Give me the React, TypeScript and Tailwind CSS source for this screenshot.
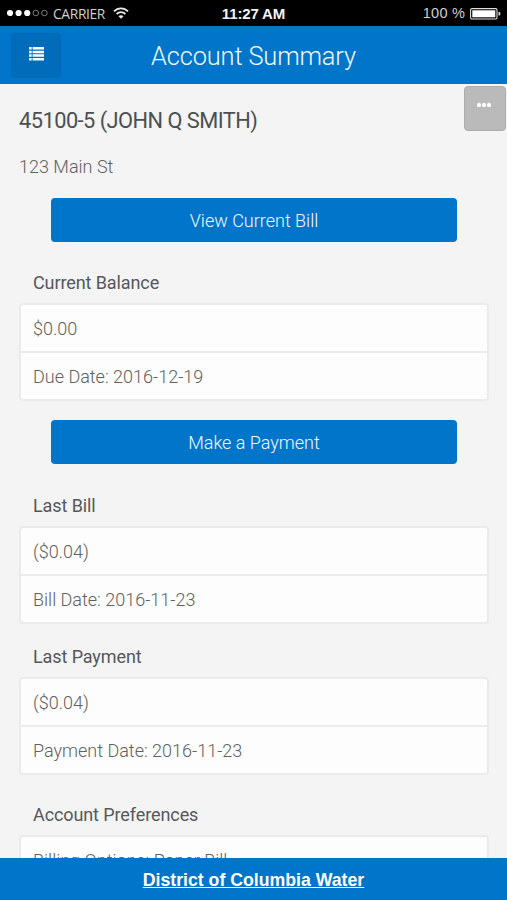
import React from "react";

type TextProps = { children: React.ReactNode };

function StatusBar() {
  return (
    <div className="grid h-[26px] shrink-0 grid-cols-3 items-center bg-black px-[7px] font-['Liberation_Sans',sans-serif] text-[#d0d0d0]">
      <div className="flex items-center">
        <svg width="42" height="8" viewBox="0 0 42 8" className="shrink-0">
          <circle cx="3" cy="4" r="3.1" fill="#fff" />
          <circle cx="11.6" cy="4" r="3.1" fill="#fff" />
          <circle cx="20.2" cy="4" r="3.1" fill="#fff" />
          <circle cx="28.8" cy="4" r="2.8" fill="none" stroke="#999" strokeWidth="0.8" />
          <circle cx="37.4" cy="4" r="2.8" fill="none" stroke="#999" strokeWidth="0.8" />
        </svg>
        <span className="ml-[4px] mt-px font-['Open_Sans',sans-serif] text-[13.8px] leading-none tracking-[-0.35px]">CARRIER</span>
        <svg width="16" height="12" viewBox="0 0 16 12" className="ml-[8px] shrink-0" fill="none" stroke="#e8e8e8" strokeWidth="1.8">
          <path d="M1 4.4C4.9 0.3 11.1 0.3 15 4.4" />
          <path d="M3.6 7C6.1 4.5 9.9 4.5 12.4 7" />
          <path d="M8 11.8L5.5 9.2C6.9 7.8 9.1 7.8 10.5 9.2Z" fill="#e8e8e8" stroke="none" />
        </svg>
      </div>
      <span className="whitespace-nowrap text-center text-[15px] font-bold leading-none tracking-[-0.15px] text-[#f4f4f4]">11:27 AM</span>
      <div className="flex items-center justify-end">
        <span className="mt-px whitespace-nowrap text-[14.5px] leading-none tracking-[0.2px]">100 %</span>
        <svg width="31" height="12" viewBox="0 0 31 12" className="-mr-[1px] ml-[5px] mt-px shrink-0">
          <rect x="0.6" y="0.6" width="26.4" height="10.4" rx="1.4" fill="none" stroke="#ddd" strokeWidth="1.1" />
          <rect x="2.3" y="2.3" width="23" height="7" fill="#fff" />
          <path d="M28.5 4h.8q1 0 1 1v1.6q0 1-1 1h-.8z" fill="#ddd" />
        </svg>
      </div>
    </div>
  );
}

function Header() {
  return (
    <header className="grid h-[58px] shrink-0 grid-cols-[1fr_auto_1fr] items-center bg-[#0175c9] px-[11px]">
      <button aria-label="Menu" className="flex h-[45px] w-[50px] items-center justify-center rounded-[4px] border border-[#0069b5] bg-[#016cb9]">
        <svg width="15" height="14" viewBox="0 0 15 13" preserveAspectRatio="none" fill="#fff" className="-mt-[2px]">
          <path d="M0 0h2.7v2.3H0zM3.6 0H15v2.3H3.6zM0 3.4h2.7v2.3H0zM3.6 3.4H15v2.3H3.6zM0 6.8h2.7v2.3H0zM3.6 6.8H15v2.3H3.6zM0 10.2h2.7v2.3H0zM3.6 10.2H15v2.3H3.6z" />
        </svg>
      </button>
      <h1 className="whitespace-nowrap pt-px text-[25.4px] font-light leading-[30px] tracking-[-0.15px] text-[#f2f9ff]">Account Summary</h1>
    </header>
  );
}

function BlueButton({ children }: TextProps) {
  return (
    <button className="mx-[32px] flex h-[44px] items-center justify-center rounded-[4px] bg-[#0175c9] text-[18px] font-light text-[#f2f9ff]">
      {children}
    </button>
  );
}

function SectionTitle({ children }: TextProps) {
  return <h3 className="px-[14px] text-[18px] font-normal leading-[22px] tracking-[-0.1px] text-[#55585a]">{children}</h3>;
}

function Card({ rows }: { rows: string[] }) {
  return (
    <ul className="divide-y-2 divide-[#ebebeb] rounded-[4px] border-2 border-[#ebebeb] bg-[#fdfdfd] text-[18px] font-light text-[#606060]">
      {rows.map((row) => (
        <li key={row} className="flex h-[48px] items-center px-[12px] last:h-[46px]">
          {row}
        </li>
      ))}
    </ul>
  );
}

export default function App() {
  return (
    <div className="relative flex h-[900px] w-full flex-col overflow-hidden bg-[#f4f4f4] font-[Roboto,sans-serif]">
      <StatusBar />
      <Header />
      <main className="flex min-h-0 flex-1 flex-col overflow-hidden pl-[19px] pr-[18px]">
        <h2 className="mt-[23px] text-[21.8px] leading-[28px] tracking-[-0.53px] text-[#4b4f52]">45100-5 (JOHN Q SMITH)</h2>
        <p className="mt-[21px] text-[18px] font-light leading-[22px] text-[#606060]">123 Main St</p>
        <div className="mt-[20px] flex flex-col">
          <BlueButton>View Current Bill</BlueButton>
        </div>
        <section className="mt-[30px]">
          <SectionTitle>Current Balance</SectionTitle>
          <div className="mt-[9px]"><Card rows={["$0.00", "Due Date: 2016-12-19"]} /></div>
        </section>
        <div className="mt-[19px] flex flex-col">
          <BlueButton>Make a Payment</BlueButton>
        </div>
        <section className="mt-[31px]">
          <SectionTitle>Last Bill</SectionTitle>
          <div className="mt-[9px]"><Card rows={["($0.04)", "Bill Date: 2016-11-23"]} /></div>
        </section>
        <section className="mt-[22px]">
          <SectionTitle>Last Payment</SectionTitle>
          <div className="mt-[9px]"><Card rows={["($0.04)", "Payment Date: 2016-11-23"]} /></div>
        </section>
        <section className="mt-[29px]">
          <SectionTitle>Account Preferences</SectionTitle>
          <div className="mt-[9px]"><Card rows={["Billing Options: Paper Bill"]} /></div>
        </section>
      </main>
      <footer className="flex h-[42px] shrink-0 items-center justify-center bg-[#0175c9] font-['Liberation_Sans',sans-serif]">
        <a className="mt-[2px] text-[17.7px] font-bold leading-[20px] text-white underline">District of Columbia Water</a>
      </footer>
      <button aria-label="More" className="absolute right-[1px] top-[86px] flex h-[45px] w-[42px] items-center justify-center rounded-[4px] border border-[#acacac] bg-[#bababa]">
        <svg width="14" height="4" viewBox="0 0 14 4" fill="#fff" className="-ml-[2px] -mt-[7px]">
          <rect width="4" height="4" rx="1.5" />
          <rect x="5" width="4" height="4" rx="1.5" />
          <rect x="10" width="4" height="4" rx="1.5" />
        </svg>
      </button>
    </div>
  );
}
